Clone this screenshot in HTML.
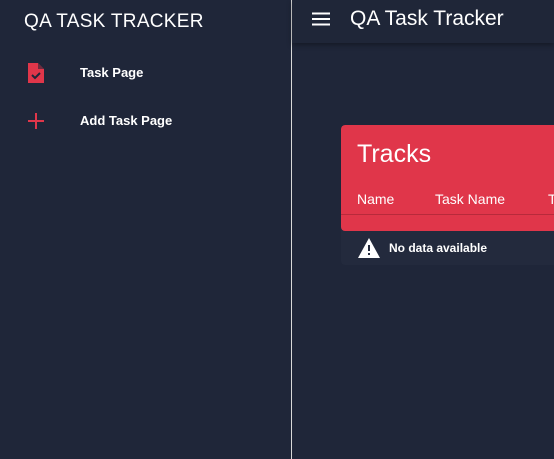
<!DOCTYPE html><html><head><style>
body{margin:0;width:554px;height:459px;background:#1f2639;font-family:"Liberation Sans",sans-serif;overflow:hidden;position:relative;color:#fff}
.side{position:absolute;left:0;top:0;width:291px;height:459px;background:#1f2639;border-right:1px solid #d8d8d8}
.t1{position:absolute;left:24px;top:11px;font-size:19px;letter-spacing:0.3px}
.item{position:absolute;left:80px;font-size:13px;font-weight:bold}
.hdr{position:absolute;left:292px;top:0;width:262px;height:43px;background:#1f2638;box-shadow:0 2px 5px rgba(0,0,0,.35)}
.card{position:absolute;left:341px;top:125px;width:220px;height:140px;border-radius:4px;overflow:hidden;background:#232a3d}
.red{position:absolute;left:0;top:0;width:100%;height:106px;background:#e0364a;border-radius:4px}
</style></head><body>
<div class="side">
<div class="t1">QA TASK TRACKER</div>
<svg style="position:absolute;left:27px;top:63px" width="18" height="20" viewBox="0 0 18 20"><path d="M1 0H11L17 6V20H1Z" fill="#e0364a"/><path d="M11 0V6H17" fill="#1f2639" opacity=".6"/><path d="M5 12L8 15L13 10" stroke="#1f2639" stroke-width="2" fill="none"/></svg>
<div class="item" style="top:65px">Task Page</div>
<svg style="position:absolute;left:28px;top:113px" width="16" height="16"><path d="M8 0V16M0 8H16" stroke="#e0364a" stroke-width="2"/></svg>
<div class="item" style="top:113px">Add Task Page</div>
</div>
<div class="hdr">
<svg style="position:absolute;left:20px;top:12px" width="18" height="14"><path d="M0 1.5H18M0 7H18M0 12.5H18" stroke="#fff" stroke-width="2"/></svg>
<div style="position:absolute;left:58px;top:7px;font-size:21px">QA Task Tracker</div>
</div>
<div class="card">
<div class="red"></div>
<div style="position:absolute;left:0;top:89px;width:100%;height:1px;background:#b82a3b"></div>
<div style="position:absolute;left:16px;top:15px;font-size:25px">Tracks</div>
<div style="position:absolute;left:16px;top:66px;font-size:14px">Name</div>
<div style="position:absolute;left:94px;top:66px;font-size:14px">Task Name</div>
<div style="position:absolute;left:207px;top:66px;font-size:14px">T</div>
<svg style="position:absolute;left:17px;top:113px" width="22" height="20"><path d="M11 0L22 20H0Z" fill="#fff"/><path d="M11 7V13M11 15V17" stroke="#232a3d" stroke-width="2"/></svg>
<div style="position:absolute;left:48px;top:116px;font-size:12px;font-weight:bold">No data available</div>
</div>
</body></html>
